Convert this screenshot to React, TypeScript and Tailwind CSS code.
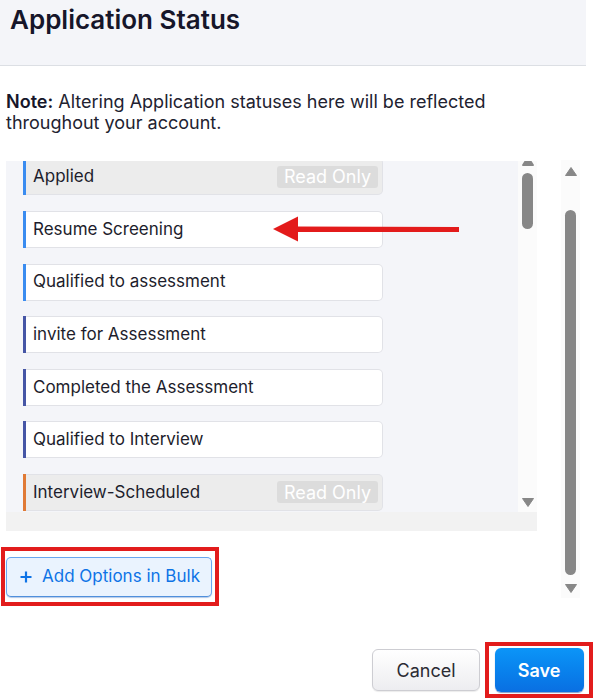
import React from "react";

type Item = { label: string; color: string; readOnly?: boolean };

const items: Item[] = [
  { label: "Applied", color: "bg-[#3a8cf0]", readOnly: true },
  { label: "Resume Screening", color: "bg-[#3a8cf0]" },
  { label: "Qualified to assessment", color: "bg-[#3a8cf0]" },
  { label: "invite for Assessment", color: "bg-[#4656a6]" },
  { label: "Completed the Assessment", color: "bg-[#4656a6]" },
  { label: "Qualified to Interview", color: "bg-[#4656a6]" },
  { label: "Interview-Scheduled", color: "bg-[#e07a35]", readOnly: true },
];

function Row({ item }: { item: Item }) {
  return (
    <div className="flex h-[37px] w-[360px] shrink-0">
      <div className={`w-[3px] ${item.color}`} />
      <div
        className={`flex flex-1 items-center justify-between rounded-r-[5px] border border-l-0 border-[#e1e2e7] pl-[7px] pr-[4px] ${
          item.readOnly ? "bg-[#ececec]" : "bg-white"
        }`}
      >
        <span className="text-[17px] text-[#1d1d2c]">{item.label}</span>
        {item.readOnly && (
          <span className="flex h-[22px] w-[101px] items-center justify-center rounded-[3px] bg-[#dcdcdc] text-[18px] text-white">
            Read Only
          </span>
        )}
      </div>
    </div>
  );
}

function Tri({ down, className }: { down?: boolean; className?: string }) {
  return (
    <svg width="12" height="9" viewBox="0 0 12 9" className={className}>
      {down ? (
        <path d="M0.5 0.5 H11.5 L6 8.5 Z" fill="#878787" stroke="#878787" strokeLinejoin="round" />
      ) : (
        <path d="M0.5 8.5 H11.5 L6 0.5 Z" fill="#878787" stroke="#878787" strokeLinejoin="round" />
      )}
    </svg>
  );
}

export default function App() {
  return (
    <div
      className="relative h-[699px] w-[594px] overflow-hidden bg-white text-[#1c1c2b]"
      style={{ fontFamily: "Inter, 'Noto Sans', sans-serif" }}
    >
      {/* Header */}
      <div className="h-[66px] w-[586px] border-b border-[#dcdfe4] bg-[#f4f5f9] pl-[10px] pt-[4px]">
        <h1 className="text-[26px] font-semibold leading-[32px] text-[#16162a]">Application Status</h1>
      </div>

      {/* Note */}
      <p className="mt-[25px] w-[540px] px-[6px] text-[18px] leading-[21px] text-[#222230]">
        <span className="font-semibold text-[#16162a]">Note:</span> Altering Application statuses here will be
        reflected throughout your account.
      </p>

      {/* Body */}
      <div className="mt-[28px] flex items-start">
        <div className="ml-[6px] flex w-[531px] flex-col">
          {/* list area */}
          <div className="flex h-[370px] flex-col">
            <div className="flex h-[351px]">
              <div className="h-full w-[512px] overflow-hidden bg-[#f4f5f9]">
                <div className="-mt-[2.6px] flex flex-col gap-[15.6px] pl-[17px]">
                  {items.map((it) => (
                    <Row key={it.label} item={it} />
                  ))}
                </div>
              </div>
              {/* inner scrollbar */}
              <div className="flex h-full w-[19px] flex-col items-center bg-[#fbfbfb]">
                <svg width="12" height="5" viewBox="0 0 12 5">
                  <path d="M2.5 0 H9.5 L12 4 Q12 5 11 5 H1 Q0 5 0 4 Z" fill="#878787" />
                </svg>
                <div className="mt-[7px] h-[56px] w-[11px] rounded-full bg-[#878787]" />
                <div className="flex-1" />
                <Tri down className="mb-[5px]" />
              </div>
            </div>
            <div className="h-[19px] bg-[#f2f2f2]" />
          </div>

          {/* Add options red box */}
          <div className="-ml-[5px] mt-[16px] h-[59px] w-[218px] border-4 border-[#e21c1c] pl-[1px] pt-[6px]">
            <button className="flex h-[40px] w-[206px] items-center gap-[10px] rounded-[5px] border border-[#68a6ef] border-b-[#4f8fdc] bg-[#eaf3fe] pl-[13px] text-[17px] text-[#0e73e6] shadow-[0_1px_1px_rgba(40,100,190,0.35)]">
              <svg width="12" height="12" viewBox="0 0 12 12">
                <path d="M6 0.5 V11.5 M0.5 6 H11.5" stroke="#0e73e6" strokeWidth="2.2" />
              </svg>
              <span>Add Options in Bulk</span>
            </button>
          </div>
        </div>

        {/* outer scrollbar */}
        <div className="-mt-[1px] ml-[24px] flex h-[438px] w-[19px] flex-col items-center bg-[#fbfbfb]">
          <Tri className="mt-[7px]" />
          <div className="mt-[34px] w-[11px] flex-1 rounded-full bg-[#878787]" />
          <Tri down className="mb-[5px] mt-[9px]" />
        </div>
      </div>

      {/* Footer */}
      <div className="mt-[36px] flex items-center justify-end gap-[5px] pr-[1px]">
        <button className="h-[42px] w-[108px] rounded-[6px] border border-[#cdcdd2] bg-gradient-to-b from-white to-[#ededf0] text-[18px] text-[#2b2b33] shadow-[0_1px_1px_rgba(0,0,0,0.08)]">
          Cancel
        </button>
        <div className="flex h-[56px] w-[108px] items-center justify-center border-4 border-[#e21c1c]">
          <button className="h-[44px] w-[89px] rounded-[6px] bg-gradient-to-b from-[#0c95f8] to-[#0a6fe2] text-[18px] font-semibold text-white shadow-[0_1px_1px_rgba(0,60,150,0.5)]">
            Save
          </button>
        </div>
      </div>

      {/* Red annotation arrow */}
      <svg className="pointer-events-none absolute left-0 top-0" width="594" height="699" viewBox="0 0 594 699">
        <path d="M296 226.5 L459 227 L459 232 L296 232 Z" fill="#e31b1b" />
        <path d="M273 229 L298 216.5 L298 241.5 Z" fill="#e31b1b" />
      </svg>
    </div>
  );
}
